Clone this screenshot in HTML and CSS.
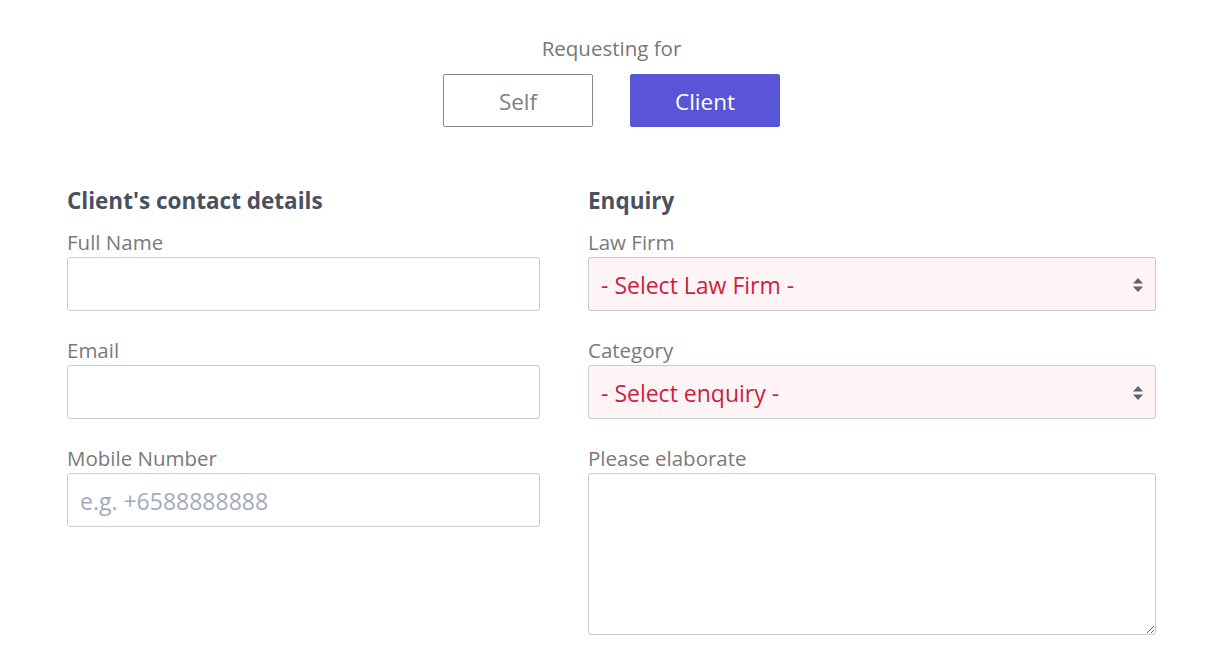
FILE: index.html
```html
<!DOCTYPE html>
<html lang="en">
<head>
    <meta charset="UTF-8">
    <meta name="viewport" content="width=device-width, initial-scale=1.0">
    <title>Enquiry</title>
    <link rel="stylesheet" href="styles.css">
</head>
<body>
    <div class="page">
        <div class="requesting">
            <div class="requesting-title">Requesting for</div>
            <div class="toggle">
                <button class="toggle-btn">Self</button>
                <button class="toggle-btn active">Client</button>
            </div>
        </div>

        <div class="form-grid">
            <!-- Contact details -->
            <div class="form-col">
                <h2 class="section-title">Client's contact details</h2>
                <div class="field">
                    <label class="field-label">Full Name</label>
                    <input class="field-input" type="text">
                </div>
                <div class="field">
                    <label class="field-label">Email</label>
                    <input class="field-input" type="text">
                </div>
                <div class="field">
                    <label class="field-label">Mobile Number</label>
                    <input class="field-input" type="text" placeholder="e.g. +6588888888">
                </div>
            </div>

            <!-- Enquiry -->
            <div class="form-col">
                <h2 class="section-title">Enquiry</h2>
                <div class="field">
                    <label class="field-label">Law Firm</label>
                    <div class="select-box">
                        <span>- Select Law Firm -</span>
                        <svg class="select-arrows" width="10" height="14" viewBox="0 0 10 14">
                            <polygon points="5,0 10,5.5 0,5.5" fill="#5b6274" />
                            <polygon points="0,8.5 10,8.5 5,14" fill="#5b6274" />
                        </svg>
                    </div>
                </div>
                <div class="field">
                    <label class="field-label">Category</label>
                    <div class="select-box">
                        <span>- Select enquiry -</span>
                        <svg class="select-arrows" width="10" height="14" viewBox="0 0 10 14">
                            <polygon points="5,0 10,5.5 0,5.5" fill="#5b6274" />
                            <polygon points="0,8.5 10,8.5 5,14" fill="#5b6274" />
                        </svg>
                    </div>
                </div>
                <div class="field">
                    <label class="field-label">Please elaborate</label>
                    <textarea class="field-textarea"></textarea>
                </div>
            </div>
        </div>
    </div>
</body>
</html>
```

FILE: styles.css
```css
body {
    margin: 0;
    font-family: 'Open Sans', 'Noto Sans', sans-serif;
    background: #fff;
    color: #777;
}

.page {
    padding: 34px 55px 0 67px;
}

.requesting {
    display: flex;
    flex-direction: column;
    align-items: center;
    margin-bottom: 58px;
}

.requesting-title {
    font-size: 20.5px;
    line-height: 28px;
    color: #777;
    margin-bottom: 12px;
}

.toggle {
    display: flex;
    gap: 37px;
}

.toggle-btn {
    width: 150px;
    height: 53px;
    padding: 2px 0 0;
    font-family: inherit;
    font-size: 22.5px;
    color: #808080;
    background: #fff;
    border: 1px solid #8a8a8a;
    border-radius: 2px;
}

.toggle-btn.active {
    background: #5955d6;
    border-color: #5955d6;
    color: #fff;
}

.form-grid {
    display: grid;
    grid-template-columns: 473px 568px;
    gap: 48px;
}

.section-title {
    margin: 0 0 10px;
    font-size: 22.5px;
    line-height: 32px;
    font-weight: 700;
    color: #4a5060;
}

.field {
    display: flex;
    flex-direction: column;
    margin-bottom: 24px;
}

.field-label {
    font-size: 20.5px;
    line-height: 30px;
    color: #7a7a7a;
}

.field-input {
    box-sizing: border-box;
    height: 54px;
    padding: 2px 12px 0;
    font-family: inherit;
    font-size: 23px;
    color: #333;
    border: 1px solid #ccc;
    border-radius: 3px;
}

.field-input::placeholder {
    color: #a3abb8;
}

.select-box {
    box-sizing: border-box;
    height: 54px;
    display: flex;
    align-items: center;
    justify-content: space-between;
    padding: 2px 12px 0 12px;
    font-size: 23px;
    color: #cc1f3e;
    background: #fff4f5;
    border: 1px solid #ccc;
    border-radius: 3px;
}

.field-textarea {
    box-sizing: border-box;
    height: 162px;
    font-family: inherit;
    font-size: 21px;
    border: 1px solid #ccc;
    border-radius: 3px;
}
```
